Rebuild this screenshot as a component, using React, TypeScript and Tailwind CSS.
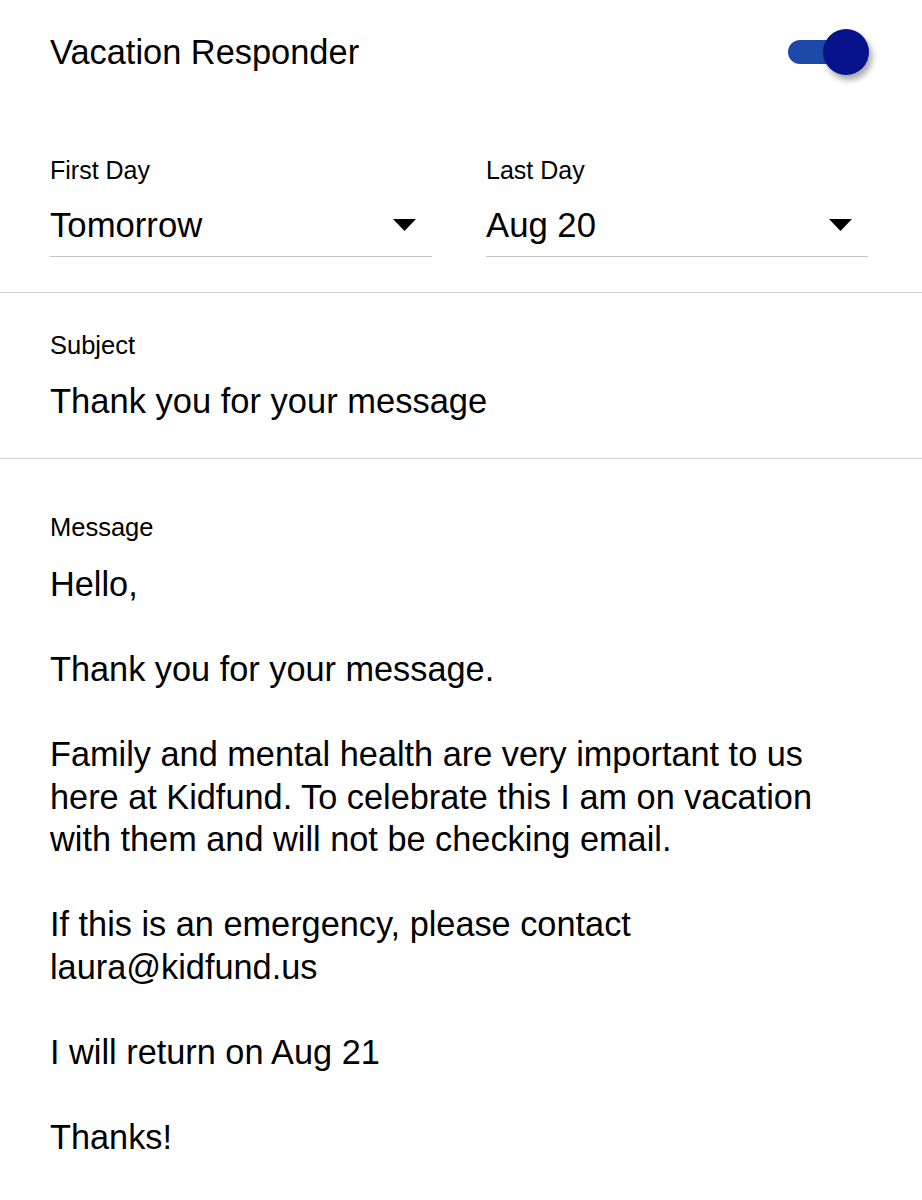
import React from 'react';

const MESSAGE_LINES = [
  'Hello,',
  '',
  'Thank you for your message.',
  '',
  'Family and mental health are very important to us',
  'here at Kidfund. To celebrate this I am on vacation',
  'with them and will not be checking email.',
  '',
  'If this is an emergency, please contact',
  'laura@kidfund.us',
  '',
  'I will return on Aug 21',
  '',
  'Thanks!',
];

const Caret = () => (
  <svg width="23" height="12" viewBox="0 0 23 12" className="shrink-0">
    <path d="M0 0 L23 0 L11.5 12 Z" fill="#000" />
  </svg>
);

const Toggle = () => (
  <div className="relative w-[81px] h-[46px] flex items-center">
    <div className="w-[62px] h-[24px] rounded-full bg-[#1d49a9]" />
    <div className="absolute right-0 top-0 w-[46px] h-[46px] rounded-full bg-[#08128a] shadow-[3px_5px_6px_rgba(0,0,0,0.35)]" />
  </div>
);

const DateField = ({ label, value }: { label: string; value: string }) => (
  <div className="flex-1">
    <div className="text-[25px] leading-[30px]">{label}</div>
    <div className="mt-[20px] flex items-center justify-between h-[40px] pr-[16px]">
      <span className="text-[34.7px] leading-[40px]">{value}</span>
      <Caret />
    </div>
    <div className="mt-[11px] h-px bg-[#c4c4c4]" />
  </div>
);

export default function App() {
  return (
    <div className="w-[922px] min-h-[1200px] bg-white text-black font-['Liberation_Sans',Arial,sans-serif]">
      {/* Header */}
      <div className="flex items-center justify-between h-[104px] pl-[50px] pr-[53px]">
        <h1 className="text-[34.4px] leading-[40px]">Vacation Responder</h1>
        <Toggle />
      </div>

      {/* Dates */}
      <div className="flex gap-[54px] pl-[50px] pr-[54px] pt-[51px] pb-[35px]">
        <DateField label="First Day" value="Tomorrow" />
        <DateField label="Last Day" value="Aug 20" />
      </div>

      <div className="h-px bg-[#cfcfcf]" />

      {/* Subject */}
      <div className="pl-[50px] pr-[54px] pt-[37px] pb-[37px]">
        <div className="text-[25.5px] leading-[30px]">Subject</div>
        <div className="mt-[21px] text-[34.5px] leading-[40px]">Thank you for your message</div>
      </div>

      <div className="h-px bg-[#cfcfcf]" />

      {/* Message */}
      <div className="pl-[50px] pr-[54px] pt-[53px] pb-[20px]">
        <div className="text-[25.5px] leading-[30px]">Message</div>
        <div className="mt-[21px] text-[34.3px] leading-[42.5px]">
          {MESSAGE_LINES.map((line, i) => (
            <div key={i} className="whitespace-nowrap h-[42.5px]">
              {line}
            </div>
          ))}
        </div>
      </div>
    </div>
  );
}
